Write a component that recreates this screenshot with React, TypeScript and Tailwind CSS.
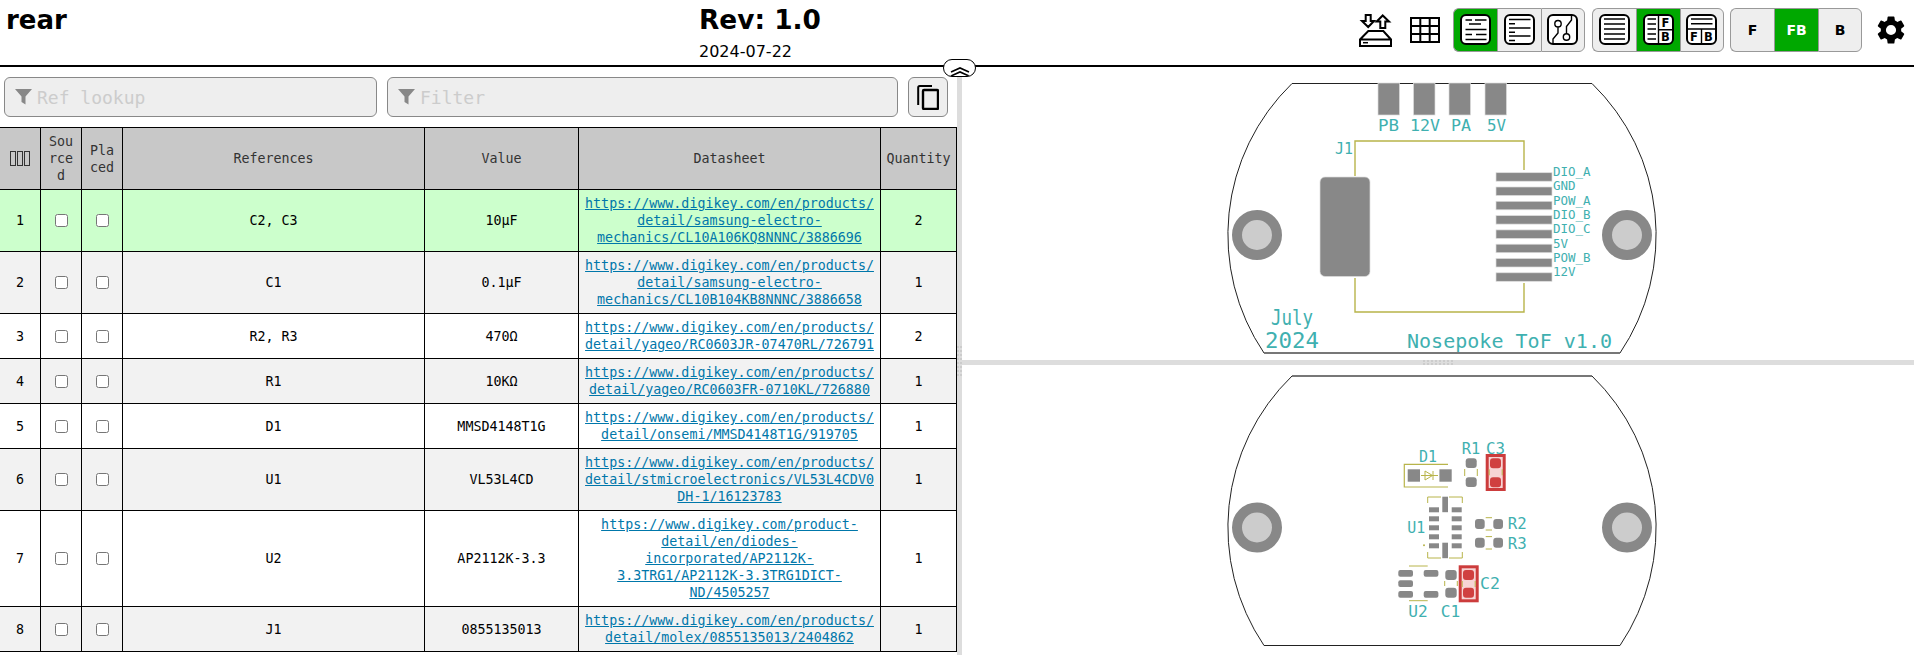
import type { ReactNode } from 'react';

const rows = [
  { id: 1, refs: 'C2, C3', value: '10µF', url: 'https://www.digikey.com/en/products/detail/samsung-electro-mechanics/CL10A106KQ8NNNC/3886696', qty: 2 },
  { id: 2, refs: 'C1', value: '0.1µF', url: 'https://www.digikey.com/en/products/detail/samsung-electro-mechanics/CL10B104KB8NNNC/3886658', qty: 1 },
  { id: 3, refs: 'R2, R3', value: '470Ω', url: 'https://www.digikey.com/en/products/detail/yageo/RC0603JR-07470RL/726791', qty: 2 },
  { id: 4, refs: 'R1', value: '10KΩ', url: 'https://www.digikey.com/en/products/detail/yageo/RC0603FR-0710KL/726880', qty: 1 },
  { id: 5, refs: 'D1', value: 'MMSD4148T1G', url: 'https://www.digikey.com/en/products/detail/onsemi/MMSD4148T1G/919705', qty: 1 },
  { id: 6, refs: 'U1', value: 'VL53L4CD', url: 'https://www.digikey.com/en/products/detail/stmicroelectronics/VL53L4CDV0DH-1/16123783', qty: 1 },
  { id: 7, refs: 'U2', value: 'AP2112K-3.3', url: 'https://www.digikey.com/product-detail/en/diodes-incorporated/AP2112K-3.3TRG1/AP2112K-3.3TRG1DICT-ND/4505257', qty: 1 },
  { id: 8, refs: 'J1', value: '0855135013', url: 'https://www.digikey.com/en/products/detail/molex/0855135013/2404862', qty: 1 },
];

const thClass = 'border border-black bg-[#c8c8c8] px-[5px] py-[5px] font-normal text-[#333] break-words';
const tdClass = 'border border-black px-[5px] py-[5px] text-center break-words';
const iconFont = "'DejaVu Sans', sans-serif";

function IconFrame({ children }: { children: ReactNode }) {
  return (
    <svg width="44" height="44" viewBox="0 0 44 44" fill="none" stroke="#000" strokeWidth="1.4" className="shrink-0">
      <rect x="7" y="7" width="29" height="29" rx="5" fill="#fff" strokeWidth="2" />
      {children}
    </svg>
  );
}

function IconLabel({ x, y, children }: { x: number; y: number; children: string }) {
  return (
    <text x={x} y={y} textAnchor="middle" fontSize="11.5" fontWeight="700" fill="#000" stroke="none" fontFamily={iconFont}>
      {children}
    </text>
  );
}

function ToolButton({ active, pos, children }: { active?: boolean; pos: 'l' | 'm' | 'r'; children: ReactNode }) {
  const shape =
    pos === 'l'
      ? 'rounded-l-[6px] border-r-0'
      : pos === 'm'
        ? 'border-r-0'
        : 'rounded-r-[6px]';
  return (
    <button
      type="button"
      className={`flex h-11 w-11 items-center justify-center overflow-hidden border border-[#999] text-[14px] font-bold ${shape} ${
        active ? 'bg-[#00a800] text-white' : 'bg-[#eee] text-black'
      }`}
    >
      {children}
    </button>
  );
}

function FunnelIcon() {
  return (
    <svg width="17" height="16" viewBox="0 0 17 16" className="shrink-0">
      <path d="M0 0H17L10.5 7.5V15.5L6.5 13V7.5Z" fill="#888" />
    </svg>
  );
}

function FilterBox({ label, className }: { label: string; className: string }) {
  return (
    <div className={`flex h-10 items-center gap-[5px] rounded-[6px] border border-[#888] bg-[#eee] pl-[10px] text-[18px] text-[#ccc] ${className}`}>
      <FunnelIcon />
      <span>{label}</span>
    </div>
  );
}

function Grip({ vertical }: { vertical?: boolean }) {
  return (
    <div className={vertical ? 'grid grid-cols-2 gap-x-[1px] gap-y-[2px]' : 'grid grid-cols-8 gap-x-[2px] gap-y-[1px]'}>
      {Array.from({ length: 16 }, (_, i) => (
        <span key={i} className="block h-[2px] w-[2px] bg-[#ccc]" />
      ))}
    </div>
  );
}

function Silk({ x, y, size = 16, w, children }: { x: number; y: number; size?: number; w?: number; children: string }) {
  return (
    <text x={x} y={y} fontSize={size} textLength={w} lengthAdjust="spacingAndGlyphs" fill="#3fb0b0" stroke="none" fontFamily="'DejaVu Sans Mono', monospace">
      {children}
    </text>
  );
}

function Board({ dy, greyEdge }: { dy: number; greyEdge: 'top' | 'bottom' }) {
  return (
    <g transform={`translate(0 ${dy})`}>
      <path d="M1292 83.5H1592A211 211 0 0 1 1620 353H1264A211 211 0 0 1 1292 83.5Z" fill="#fff" stroke="#222" strokeWidth="1" />
      <path d={greyEdge === 'bottom' ? 'M1264 353H1620' : 'M1292 83.5H1592'} stroke="#777" strokeWidth="2" />
      <circle cx="1257" cy="235" r="20" fill="#ccc" stroke="#888" strokeWidth="10" />
      <circle cx="1627" cy="235" r="20" fill="#ccc" stroke="#888" strokeWidth="10" />
    </g>
  );
}

const frontPads = [172.7, 187, 201.3, 215.6, 229.9, 244.2, 258.5, 272.8];
const frontNets = ['DIO_A', 'GND', 'POW_A', 'DIO_B', 'DIO_C', '5V', 'POW_B', '12V'];

function FrontBoard() {
  return (
    <svg className="block h-full w-full" viewBox="962 67 952 293">
      <Board dy={0} greyEdge="bottom" />
      <g fill="#888" stroke="#ddd" strokeWidth="0.7">
        {[1378, 1413.5, 1449, 1485].map((x) => (
          <rect key={x} x={x} y="83" width="21.5" height="32" />
        ))}
        <rect x="1320" y="177" width="50" height="99.5" rx="5" />
        {frontPads.map((y) => (
          <rect key={y} x="1496" y={y} width="56" height="8.5" />
        ))}
      </g>
      <path d="M1355 176V141H1524V170M1355 278V312H1524V283" fill="none" stroke="#b8b44a" strokeWidth="1.4" />
      <Silk x={1378} y={131} size={15} w={21}>PB</Silk>
      <Silk x={1410} y={131} size={15} w={30}>12V</Silk>
      <Silk x={1451} y={131} size={15} w={20}>PA</Silk>
      <Silk x={1487} y={131} size={15} w={19}>5V</Silk>
      <Silk x={1335} y={154} size={15} w={18}>J1</Silk>
      {frontNets.map((net, i) => (
        <Silk key={net} x={1553} y={176 + i * 14.33} size={12.5}>{net}</Silk>
      ))}
      <Silk x={1271} y={325} size={22} w={42}>July</Silk>
      <Silk x={1265} y={348} size={22} w={54}>2024</Silk>
      <Silk x={1407} y={347.5} size={20} w={205}>Nosepoke ToF v1.0</Silk>
    </svg>
  );
}

const backSilk = '#b8b44a';

function BackBoard() {
  return (
    <svg className="block h-full w-full" viewBox="962 365 952 290">
      <Board dy={292.5} greyEdge="top" />
      {/* D1 */}
      <path d="M1448 464.3H1404.3V487H1448" fill="none" stroke={backSilk} strokeWidth="1.2" />
      <path d="M1421 475.5H1438M1425 471V480L1432.5 475.5ZM1433 471V480" fill="none" stroke={backSilk} strokeWidth="1" />
      <g fill="#888">
        <rect x="1407.7" y="469.3" width="12.3" height="12.4" />
        <rect x="1439.4" y="469.3" width="12.3" height="12.4" />
        {/* R1 */}
        <rect x="1465.7" y="458.3" width="11" height="9.6" rx="3" />
        <rect x="1465.7" y="477.3" width="11" height="9.6" rx="3" />
        {/* U1 */}
        {[507.3, 516.3, 525.3, 534.3, 543.3].map((y) => (
          <g key={y}>
            <rect x="1429" y={y} width="10" height="5" />
            <rect x="1451.7" y={y} width="10" height="5" />
          </g>
        ))}
        <rect x="1442.3" y="496.7" width="5.7" height="15.5" />
        <rect x="1442.3" y="542.7" width="5.7" height="15.5" />
        {/* R2 R3 */}
        {[519, 537.7].map((y) => (
          <g key={y}>
            <rect x="1475" y={y} width="9.7" height="10" rx="3" />
            <rect x="1493.3" y={y} width="9.7" height="10" rx="3" />
          </g>
        ))}
        {/* U2 */}
        <rect x="1398.3" y="570" width="14.7" height="6.7" rx="2" />
        <rect x="1398.3" y="580.3" width="14.7" height="6.7" rx="2" />
        <rect x="1398.3" y="591" width="14.7" height="6.7" rx="2" />
        <rect x="1423.7" y="570" width="14.7" height="6.7" rx="2" />
        <rect x="1423.7" y="591" width="14.7" height="6.7" rx="2" />
        {/* C1 */}
        <rect x="1445.3" y="570" width="11.4" height="10" rx="3" />
        <rect x="1445.3" y="587.7" width="11.4" height="10" rx="3" />
      </g>
      <circle cx="1424" cy="545.3" r="1" fill={backSilk} />
      <path
        d="M1464.7 469V476M1477.3 469V476M1427.7 503V497H1441M1449 497H1462.3V503M1427.7 552V558H1441M1449 558H1462.3V552M1485.7 517.7H1492M1485.7 530H1492M1485.7 536.6H1492M1485.7 549H1492M1409 566H1427.7M1409 600.7H1427.7M1444.7 581V586M1457.3 581V586"
        fill="none"
        stroke={backSilk}
        strokeWidth="1"
      />
      {/* highlighted capacitors */}
      {[
        { x: 1485.7, y: 454, a: 458.3, b: 477.3 },
        { x: 1458.7, y: 565.3, a: 570, b: 587.7 },
      ].map((c) => (
        <g key={c.x}>
          <rect x={c.x + 1.5} y={c.y + 1.5} width="17" height="34" fill="#f7d4d4" stroke="#cc3c3c" strokeWidth="3" />
          <rect x={c.x + 4.3} y={c.a} width="11" height="10" rx="3" fill="#d04040" />
          <rect x={c.x + 4.3} y={c.b} width="11" height="10" rx="3" fill="#d04040" />
          <path d={`M${c.x + 3.5} ${c.a + 11}v6M${c.x + 16.5} ${c.a + 11}v6`} stroke={backSilk} strokeWidth="1" />
        </g>
      ))}
      <Silk x={1419} y={461.7} w={18}>D1</Silk>
      <Silk x={1461.7} y={454.3} w={18.5}>R1</Silk>
      <Silk x={1486} y={454.3} w={19}>C3</Silk>
      <Silk x={1407.3} y={533.3} w={18}>U1</Silk>
      <Silk x={1507.7} y={529.3} w={19}>R2</Silk>
      <Silk x={1507.7} y={549.3} w={19}>R3</Silk>
      <Silk x={1480} y={589} w={20}>C2</Silk>
      <Silk x={1408.3} y={617.3} w={19.5}>U2</Silk>
      <Silk x={1440.7} y={617.3} w={19.5}>C1</Silk>
    </svg>
  );
}

function Toolbar() {
  return (
    <div className="flex items-center pr-[1px] pt-[8px]">
      <button type="button" className="flex h-11 w-11 items-center justify-center">
        <svg width="33" height="33" viewBox="0 0 33 33" fill="none" stroke="#000" strokeWidth="2">
          <path d="M1 25.5L9.3 17H24.3L32 25.5V32H1ZM1 25.5H32" />
          <path d="M4 28.7H9" strokeWidth="1.5" />
          <path d="M6.7 1H11.7V7H15L9.2 13L3 7H6.7ZM21.3 14V7.5H17.7L23.7 1.5L30 7.5H26.3V14Z" />
        </svg>
      </button>
      <button type="button" className="ml-[6px] flex h-11 w-11 items-center justify-center">
        <svg width="30" height="26" viewBox="0 0 30 26" fill="none" stroke="#000" strokeWidth="2">
          <path d="M1 1H29V25H1ZM1 9H29M1 17H29M10.3 1V25M19.7 1V25" />
        </svg>
      </button>
      <div className="ml-[6px] flex">
        <ToolButton pos="l" active>
          <IconFrame>
            <path d="M11.5 12H18M21 12H32.5M15 16H27M11.5 21.5H32.5M11.5 26.5H18M22 26.5H32.5M11.5 31.5H32.5" />
          </IconFrame>
        </ToolButton>
        <ToolButton pos="m">
          <IconFrame>
            <path d="M11 11.5H32.5M11 15.7H17M11 20H32.5M11 24.3H17M11 28H32.5M11 32.5H17" />
          </IconFrame>
        </ToolButton>
        <ToolButton pos="r">
          <IconFrame>
            <circle cx="17" cy="15.7" r="3.2" />
            <circle cx="25.5" cy="29" r="3.2" />
            <path d="M17 19V25L12 31V35M25.5 25.8V18.5L30.5 12V8" />
          </IconFrame>
        </ToolButton>
      </div>
      <div className="ml-[7px] flex">
        <ToolButton pos="l">
          <IconFrame>
            <path d="M11 11H32M11 16H32M11 21H32M11 26H32M11 31H32" />
          </IconFrame>
        </ToolButton>
        <ToolButton pos="m" active>
          <IconFrame>
            <path d="M21.5 7V36M21.5 21.7H36M10.5 11H19M10.5 16H19M10.5 21H19M10.5 26H19M10.5 31H19" />
            <IconLabel x={28.5} y={19}>F</IconLabel>
            <IconLabel x={28.5} y={33}>B</IconLabel>
          </IconFrame>
        </ToolButton>
        <ToolButton pos="r">
          <IconFrame>
            <path d="M7 21H36M21.5 21V36M11 11H32.5M11 15.7H32.5" />
            <IconLabel x={14} y={33}>F</IconLabel>
            <IconLabel x={28.5} y={33}>B</IconLabel>
          </IconFrame>
        </ToolButton>
      </div>
      <div className="ml-[6px] flex font-['DejaVu_Sans',sans-serif]">
        <ToolButton pos="l">F</ToolButton>
        <ToolButton pos="m" active>FB</ToolButton>
        <ToolButton pos="r">B</ToolButton>
      </div>
      <button type="button" className="ml-[7px] flex h-11 w-11 items-center justify-center">
        <svg width="34" height="34" viewBox="0 0 24 24" fill="#000">
          <path d="M19.14 12.94c.04-.3.06-.61.06-.94s-.02-.64-.07-.94l2.03-1.58a.49.49 0 0 0 .12-.61l-1.92-3.32a.49.49 0 0 0-.59-.22l-2.39.96a7 7 0 0 0-1.62-.94l-.36-2.54a.48.48 0 0 0-.48-.41h-3.84a.48.48 0 0 0-.47.41l-.36 2.54a7.3 7.3 0 0 0-1.62.94l-2.39-.96a.48.48 0 0 0-.59.22L2.74 8.87a.48.48 0 0 0 .12.61l2.03 1.58c-.05.3-.09.63-.09.94s.02.64.07.94l-2.03 1.58a.49.49 0 0 0-.12.61l1.92 3.32c.12.22.37.29.59.22l2.39-.96c.5.38 1.03.7 1.62.94l.36 2.54c.05.24.24.41.48.41h3.84c.24 0 .44-.17.47-.41l.36-2.54a6.9 6.9 0 0 0 1.62-.94l2.39.96c.22.08.47 0 .59-.22l1.92-3.32a.48.48 0 0 0-.12-.61zM12 15.6A3.6 3.6 0 1 1 12 8.4a3.6 3.6 0 0 1 0 7.2z" />
        </svg>
      </button>
    </div>
  );
}

export default function App() {
  return (
    <div className="relative flex h-[655px] w-full flex-col overflow-hidden bg-white font-['DejaVu_Sans_Mono',monospace] text-[13.33px] leading-[17px] text-black">
      <header className="flex h-[67px] shrink-0 items-start justify-between border-b-2 border-black font-['DejaVu_Sans',sans-serif]">
        <div className="flex flex-1">
          <div className="w-[699px] pl-[6px] pt-[5px] text-[26px] font-bold leading-[30px]">rear</div>
          <div className="pt-[5px]">
            <div className="text-[26.4px] font-bold leading-[30px]">Rev: 1.0</div>
            <div className="mt-[7px] text-[16px] leading-[19px]">2024-07-22</div>
          </div>
        </div>
        <Toolbar />
      </header>

      <main className="flex min-h-0 flex-1">
        <section className="w-[957px] shrink-0 overflow-hidden">
          <div className="flex h-[60px] items-start gap-[10px] pl-[4px] pt-[10px]">
            <FilterBox label="Ref lookup" className="w-[373px]" />
            <FilterBox label="Filter" className="w-[511px]" />
            <button type="button" className="flex h-10 w-10 items-center justify-center rounded-[6px] border border-[#888] bg-[#eee]">
              <svg width="22" height="25" viewBox="0 0 22 25" fill="none" stroke="#000" strokeWidth="2">
                <rect x="6" y="5" width="15" height="19" rx="1" strokeWidth="2.4" />
                <path d="M1.2 20V2.5A1.5 1.5 0 0 1 2.7 1H15" />
              </svg>
            </button>
          </div>
          <table className="-ml-[1px] w-[958px] table-fixed border-collapse">
            <colgroup>
              <col className="w-[41px]" />
              <col className="w-[41px]" />
              <col className="w-[41px]" />
              <col className="w-[302px]" />
              <col className="w-[154px]" />
              <col className="w-[302px]" />
              <col className="w-[76px]" />
            </colgroup>
            <thead>
              <tr>
                <th className={thClass}>
                  <span className="flex justify-center gap-[1px]">
                    <span className="h-[15px] w-[6px] border border-[#333]" />
                    <span className="h-[15px] w-[6px] border border-[#333]" />
                    <span className="h-[15px] w-[6px] border border-[#333]" />
                  </span>
                </th>
                <th className={thClass}>Sourced</th>
                <th className={thClass}>Placed</th>
                <th className={thClass}>References</th>
                <th className={thClass}>Value</th>
                <th className={thClass}>Datasheet</th>
                <th className={thClass}>Quantity</th>
              </tr>
            </thead>
            <tbody>
              {rows.map((row) => (
                <tr key={row.id} className={row.id === 1 ? 'bg-[#ccffcc]' : row.id % 2 === 0 ? 'bg-[#f2f2f2]' : 'bg-white'}>
                  <td className={tdClass}>{row.id}</td>
                  <td className={tdClass}>
                    <input type="checkbox" className="m-0 mx-auto block h-[13px] w-[13px]" />
                  </td>
                  <td className={tdClass}>
                    <input type="checkbox" className="m-0 mx-auto block h-[13px] w-[13px]" />
                  </td>
                  <td className={tdClass}>{row.refs}</td>
                  <td className={tdClass}>{row.value}</td>
                  <td className={tdClass}>
                    <a href="#" className="text-[#0077aa] underline">{row.url}</a>
                  </td>
                  <td className={tdClass}>{row.qty}</td>
                </tr>
              ))}
            </tbody>
          </table>
        </section>

        <div className="flex w-[5px] shrink-0 items-center justify-center bg-[#ddd]">
          <Grip vertical />
        </div>

        <section className="flex min-w-0 flex-1 flex-col">
          <div className="h-[293px] shrink-0">
            <FrontBoard />
          </div>
          <div className="flex h-[5px] shrink-0 items-center justify-center bg-[#ddd]">
            <Grip />
          </div>
          <div className="min-h-0 flex-1">
            <BackBoard />
          </div>
        </section>
      </main>

      {/* collapse handle on the header rule */}
      <button type="button" className="absolute left-[943px] top-[59px] flex h-[18px] w-[33px] items-end justify-center overflow-hidden rounded-[10px] border-[1.5px] border-black bg-white">
        <svg width="20" height="9" viewBox="0 0 20 9" fill="none" stroke="#000" strokeWidth="1.6">
          <path d="M1 5L10 1L19 5M1 9L10 5L19 9" />
        </svg>
      </button>
    </div>
  );
}
